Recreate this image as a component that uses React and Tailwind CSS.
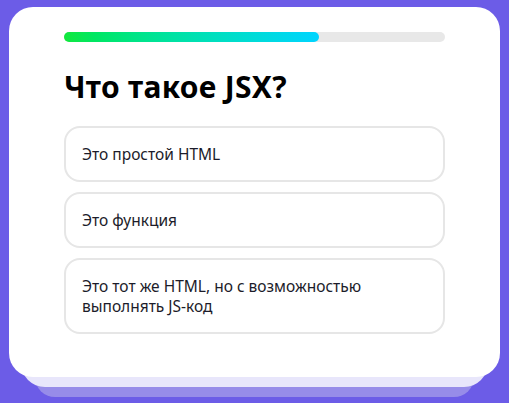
import React from "react";

const answers = [
  "Это простой HTML",
  "Это функция",
  "Это тот же HTML, но с возможностью выполнять JS-код",
];

const App = () => {
  const step = 2;
  const total = 3;
  const percent = Math.round((step / total) * 100);

  return (
    <div
      className="min-h-[403px] w-full bg-[#6c5ce7] pt-[7px] px-[9px]"
      style={{ fontFamily: '"Noto Sans", sans-serif' }}
    >
      <div className="relative">
        {/* stacked layers under the card */}
        <div className="absolute left-[26px] right-[26px] top-[40px] bottom-[-20px] rounded-[20px] bg-[#978ce9]" />
        <div className="absolute left-[12px] right-[12px] top-[40px] bottom-[-10px] rounded-3xl bg-[#e8e6fb]" />

        <div className="relative h-[370px] rounded-3xl bg-white px-[55px] pt-[25px]">
          <div className="h-[10px] w-full rounded-full bg-[#e8e8e8]">
            <div
              className="h-full rounded-full bg-gradient-to-r from-[#12e83b] to-[#00d4ff]"
              style={{ width: `${percent}%` }}
            />
          </div>

          <h1 className="mt-[27px] text-[30px] leading-[36px] font-bold tracking-[0.3px] text-black">
            Что такое JSX?
          </h1>

          <ul className="mt-[21px] flex flex-col gap-[10px]">
            {answers.map((text, index) => (
              <li
                key={index}
                className="rounded-2xl border-2 border-[#e6e6e6] px-4 py-4 text-[15.5px] leading-[20px] text-[#1c1c2a]"
              >
                {text}
              </li>
            ))}
          </ul>
        </div>
      </div>
    </div>
  );
};

export default App;
